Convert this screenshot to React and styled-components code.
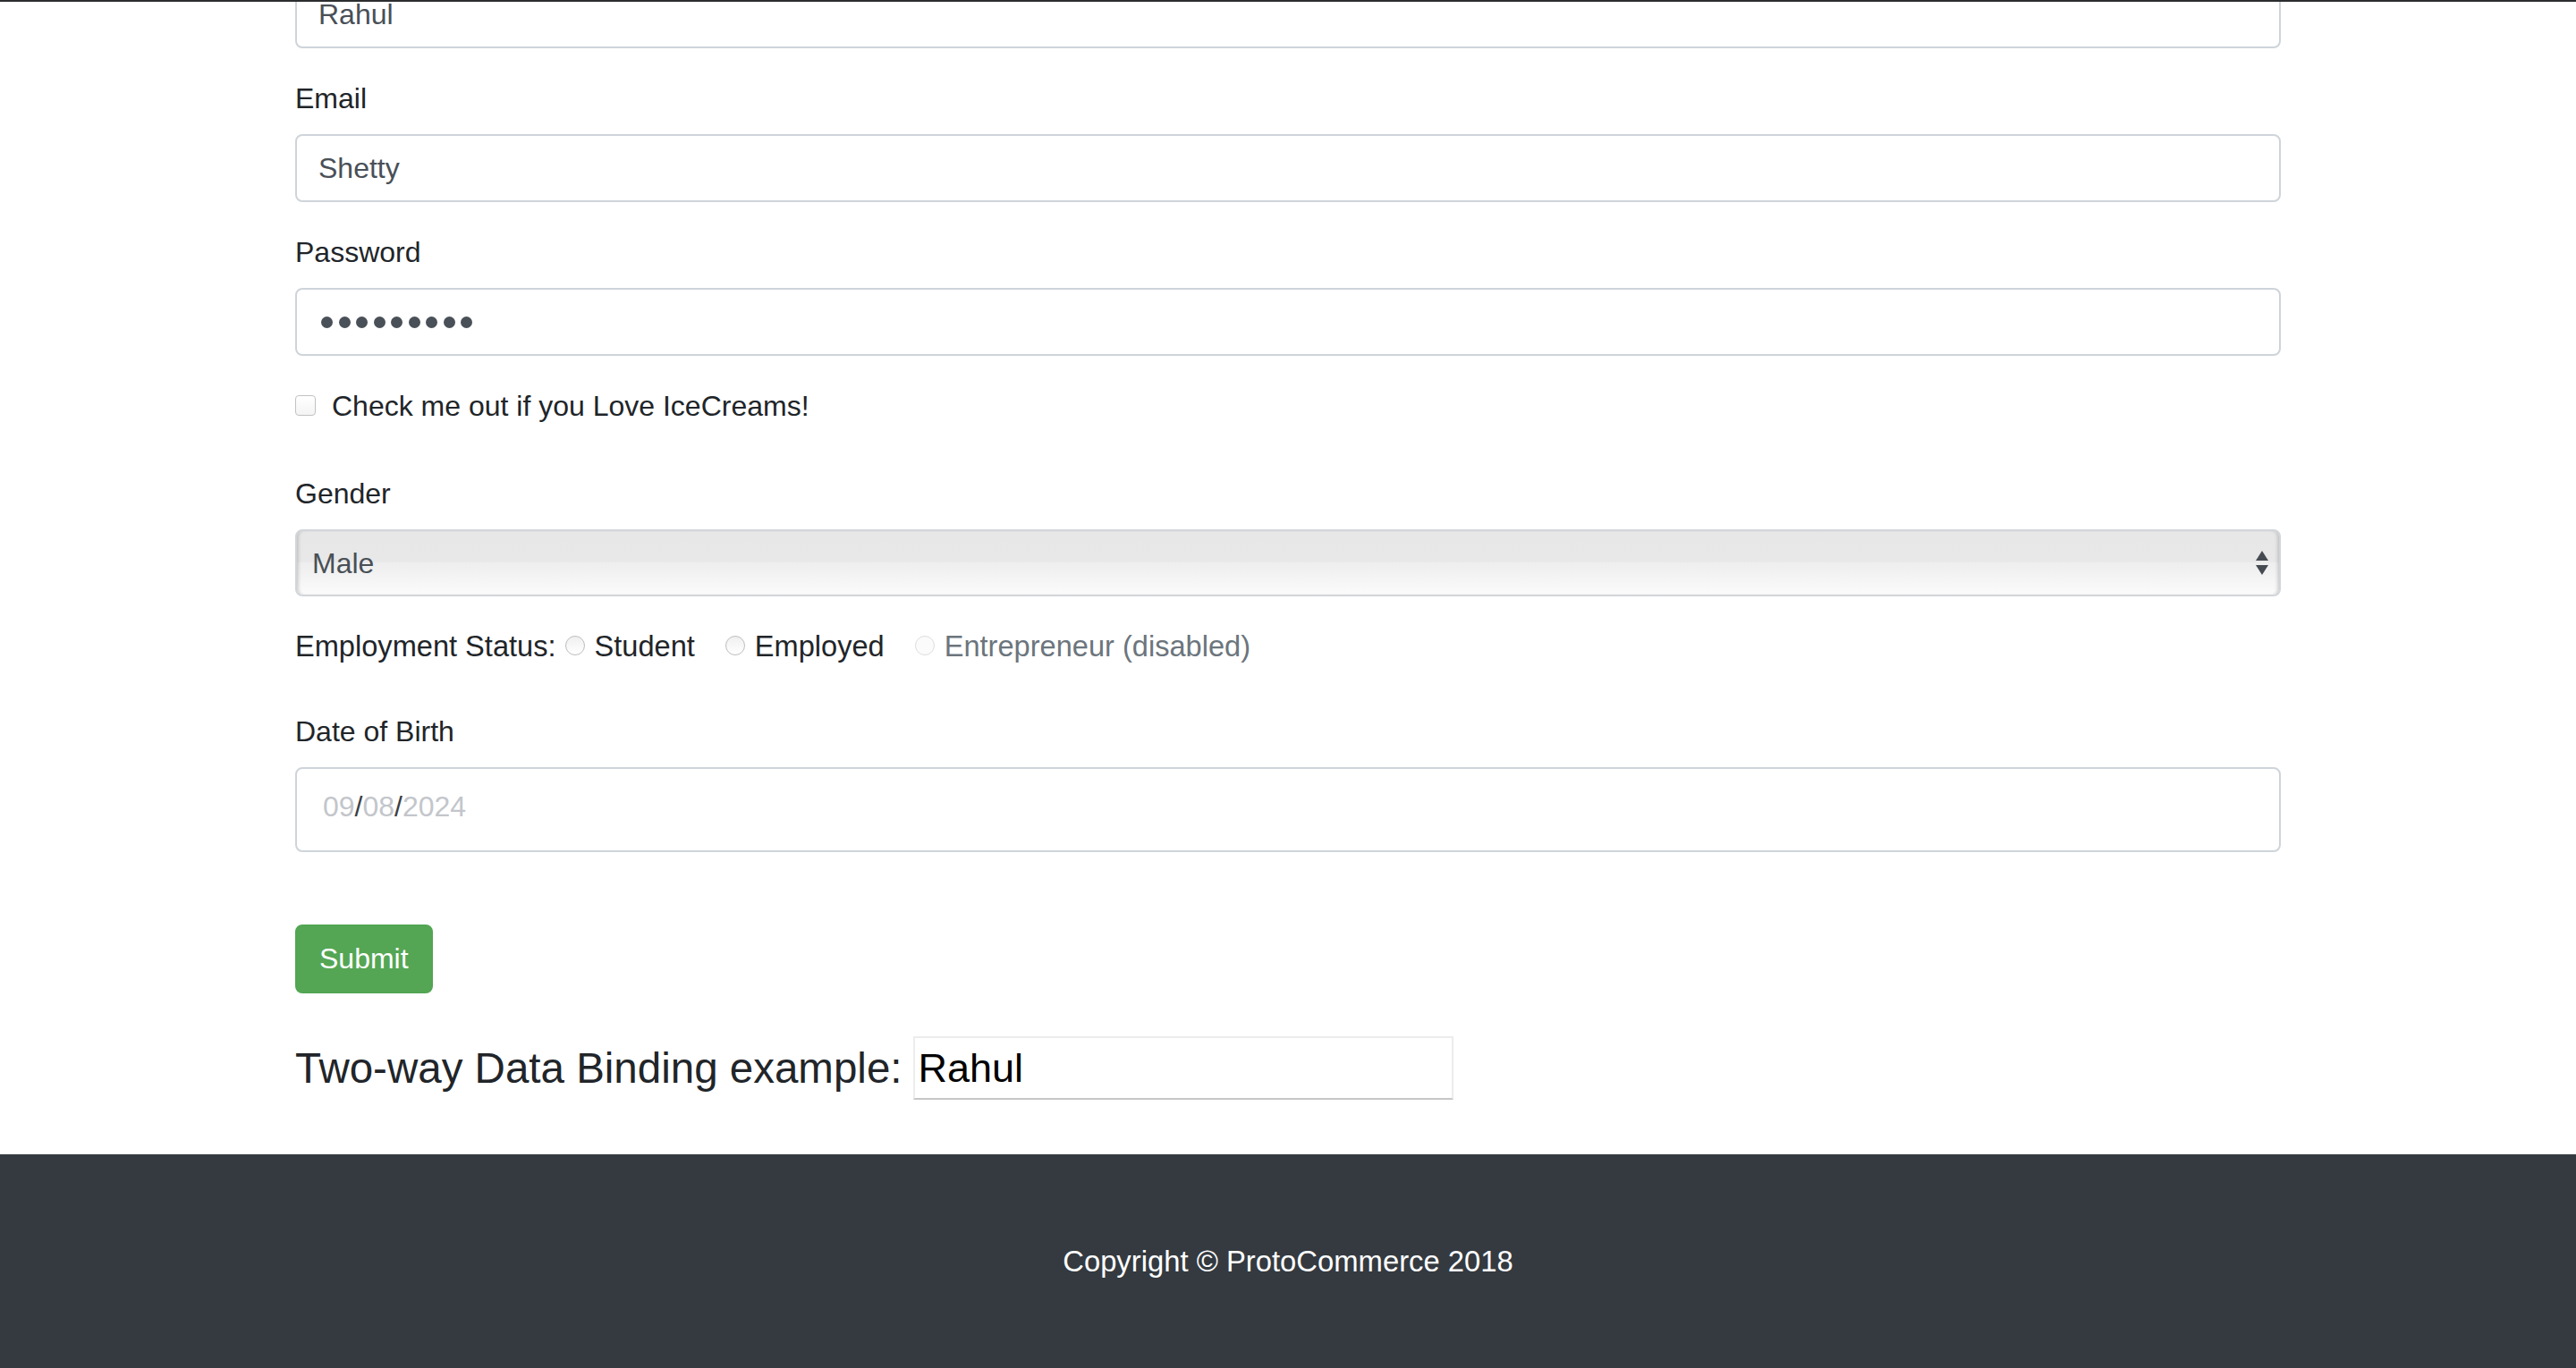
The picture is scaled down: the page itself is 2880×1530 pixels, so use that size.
import React from "react";
import styled, { createGlobalStyle } from "styled-components";

const GlobalStyle = createGlobalStyle`
  html, body { margin: 0; padding: 0; background: #fff; }
  body {
    font-family: "Liberation Sans", Arial, Helvetica, sans-serif;
    font-size: 32px;
    line-height: 48px;
    color: #212529;
  }
  *, *::before, *::after { box-sizing: border-box; }
`;

const Page = styled.div`
  border-top: 2px solid #2b2d2f;
  overflow: hidden;
`;

const Container = styled.div`
  max-width: 2280px;
  margin: 0 auto;
  padding: 0 30px;
`;

const Form = styled.form`
  display: block;
`;

const FormGroup = styled.div`
  margin-bottom: ${(p) => (p.$mb != null ? p.$mb : 32)}px;
`;

const Label = styled.label`
  display: block;
  margin-bottom: 16px;
  line-height: 48px;
  color: #212529;
`;

const TextInput = styled.input`
  display: block;
  width: 100%;
  height: 76px;
  margin-top: ${(p) => p.$mt || 0}px;
  padding: 12px 24px;
  font-family: inherit;
  font-size: 32px;
  line-height: 48px;
  color: #495057;
  background: #fff;
  border: 2px solid #ced4da;
  border-radius: 8px;
  outline: none;
`;

const PasswordBox = styled.div`
  display: flex;
  align-items: center;
  gap: 6.5px;
  height: 76px;
  padding: 0 27px;
  background: #fff;
  border: 2px solid #ced4da;
  border-radius: 8px;
`;

const Dot = styled.span`
  width: 13px;
  height: 13px;
  border-radius: 50%;
  background: #495057;
`;

const CheckRow = styled.div`
  display: flex;
  align-items: center;
  height: 48px;
  margin-bottom: 50px;
`;

const Checkbox = styled.input`
  appearance: none;
  -webkit-appearance: none;
  width: 23px;
  height: 23px;
  margin: 0 18px 2px 0;
  border: 1.5px solid #c2c2c2;
  border-radius: 4px;
  background: linear-gradient(#ffffff, #f4f4f4);
`;

const SelectWrap = styled.div`
  position: relative;
  height: 75px;
`;

const Select = styled.select`
  appearance: none;
  -webkit-appearance: none;
  width: 100%;
  height: 75px;
  padding: 0 60px 0 17px;
  font-family: inherit;
  font-size: 32px;
  color: #495057;
  border: 2px solid #d2d6da;
  border-radius: 8px;
  background: linear-gradient(
    #e7e7e7 0%,
    #e8e8e8 48%,
    #eeeeee 50%,
    #f3f3f3 70%,
    #fbfbfb 100%
  );
  box-shadow: inset 4px 0 4px -3px rgba(0, 0, 0, 0.22),
    inset -4px 0 4px -3px rgba(0, 0, 0, 0.22);
  outline: none;
`;

const SelectArrows = styled.svg`
  position: absolute;
  right: 14px;
  top: 24px;
  pointer-events: none;
`;

const StatusRow = styled.div`
  display: flex;
  align-items: center;
  height: 48px;
  margin-bottom: 47px;
  font-size: 32.6px;
`;

const StatusLabel = styled.span`
  margin-right: 10px;
`;

const RadioOption = styled.label`
  display: inline-flex;
  align-items: center;
  margin-right: 34px;
  color: ${(p) => (p.$disabled ? "#6c757d" : "#212529")};
`;

const Radio = styled.input`
  appearance: none;
  -webkit-appearance: none;
  width: 22px;
  height: 22px;
  margin: 0 11px 2px 0;
  border-radius: 50%;
  border: 1.5px solid ${(p) => (p.disabled ? "#dedede" : "#bdbdbd")};
  background: ${(p) =>
    p.disabled ? "#fbfbfb" : "linear-gradient(#f0f0f0, #ffffff)"};
`;

const DateBox = styled.div`
  display: flex;
  align-items: center;
  height: 95px;
  padding: 0 29px 8px;
  background: #fff;
  border: 2px solid #ced4da;
  border-radius: 8px;
  font-size: 32px;
`;

const DatePart = styled.span`
  color: #c3c6cb;
`;

const DateSep = styled.span`
  color: #3b3f44;
`;

const SubmitButton = styled.button`
  display: block;
  height: 77px;
  margin-top: 81px;
  padding: 0 25px;
  font-family: inherit;
  font-size: 32px;
  color: #fff;
  background: #54a654;
  border: 2px solid #52a552;
  border-radius: 8px;
`;

const BindingRow = styled.div`
  display: flex;
  align-items: center;
  gap: 12px;
  margin-top: 48px;
  margin-bottom: 61px;
`;

const BindingHeading = styled.h4`
  margin: 0;
  font-size: 47.5px;
  font-weight: 400;
  line-height: 1.2;
  color: #212529;
`;

const BindingInput = styled.input`
  width: 604px;
  height: 71px;
  padding: 0 4px;
  font-family: inherit;
  font-size: 45px;
  color: #000;
  background: #fff;
  border: 2px solid;
  border-color: #ececec #ececec #c6c6c6 #ececec;
  outline: none;
`;

const Footer = styled.footer`
  background: #343a40;
  padding: 96px 0;
  text-align: center;
  color: #fff;
  font-size: 32.8px;
  line-height: 48px;
`;

export default function App() {
  const parts = ["09", "08", "2024"];
  return (
    <>
      <GlobalStyle />
      <Page>
        <Container>
          <Form onSubmit={(e) => e.preventDefault()}>
            <FormGroup>
              <TextInput $mt={-24} type="text" defaultValue="Rahul" />
            </FormGroup>
            <FormGroup>
              <Label>Email</Label>
              <TextInput type="text" defaultValue="Shetty" />
            </FormGroup>
            <FormGroup>
              <Label>Password</Label>
              <PasswordBox aria-label="password">
                {Array.from({ length: 9 }).map((_, i) => (
                  <Dot key={i} />
                ))}
              </PasswordBox>
            </FormGroup>
            <CheckRow>
              <Checkbox type="checkbox" id="ice" />
              <label htmlFor="ice">Check me out if you Love IceCreams!</label>
            </CheckRow>
            <FormGroup>
              <Label>Gender</Label>
              <SelectWrap>
                <Select defaultValue="Male">
                  <option>Male</option>
                  <option>Female</option>
                </Select>
                <SelectArrows width="14" height="28" viewBox="0 0 14 28">
                  <polygon points="0,11 7,0 14,11" fill="#464b51" />
                  <polygon points="0,16 14,16 7,27" fill="#464b51" />
                </SelectArrows>
              </SelectWrap>
            </FormGroup>
            <StatusRow>
              <StatusLabel>Employment Status:</StatusLabel>
              <RadioOption>
                <Radio type="radio" name="status" />
                Student
              </RadioOption>
              <RadioOption>
                <Radio type="radio" name="status" />
                Employed
              </RadioOption>
              <RadioOption $disabled>
                <Radio type="radio" name="status" disabled />
                Entrepreneur (disabled)
              </RadioOption>
            </StatusRow>
            <FormGroup $mb={0}>
              <Label>Date of Birth</Label>
              <DateBox>
                {parts.map((p, i) => (
                  <React.Fragment key={i}>
                    <DatePart>{p}</DatePart>
                    {i < parts.length - 1 && <DateSep>/</DateSep>}
                  </React.Fragment>
                ))}
              </DateBox>
            </FormGroup>
            <SubmitButton type="submit">Submit</SubmitButton>
          </Form>
          <BindingRow>
            <BindingHeading>Two-way Data Binding example:</BindingHeading>
            <BindingInput type="text" defaultValue="Rahul" />
          </BindingRow>
        </Container>
        <Footer>Copyright © ProtoCommerce 2018</Footer>
      </Page>
    </>
  );
}
